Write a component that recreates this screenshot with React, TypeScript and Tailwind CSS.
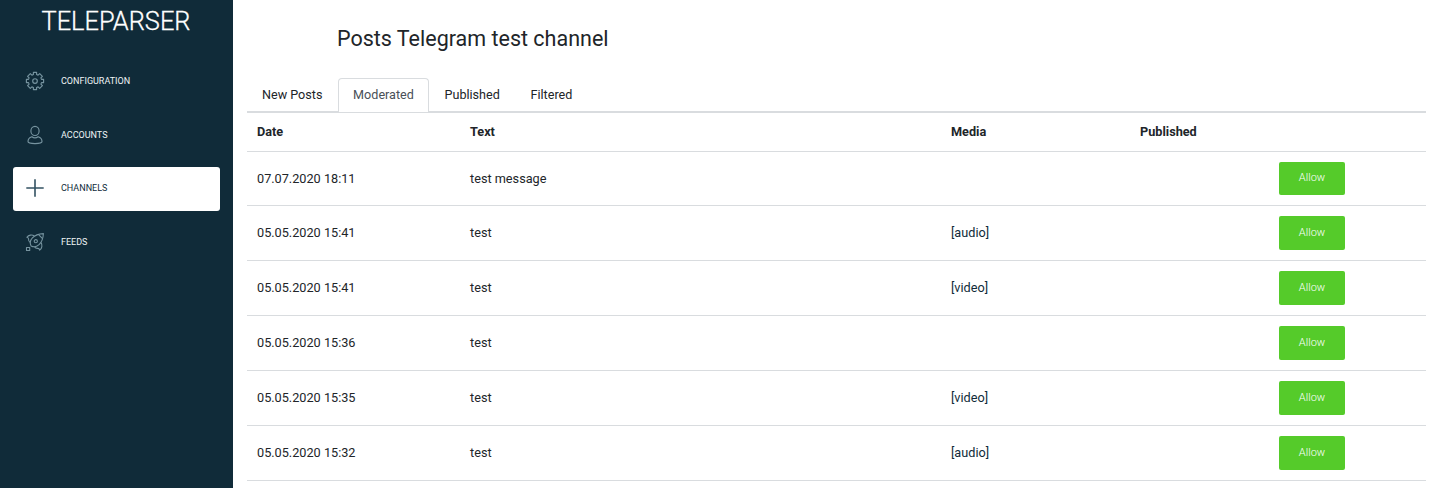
import React from "react";

function GearIcon() {
  return (
    <svg width="20" height="20" viewBox="0 0 20 20" fill="none" stroke="currentColor" strokeWidth="1.15" strokeLinejoin="round">
      <path d="M8.4 1.4h3.2v2.1l1.5.6 1.6-1.5 2.7 2.7-1.5 1.6.6 1.5h2.1v3.2h-2.1l-.6 1.5 1.5 1.6-2.7 2.7-1.6-1.5-1.5.6v2.1H8.4v-2.1l-1.5-.6-1.6 1.5-2.7-2.7 1.5-1.6-.6-1.5H1.4V8.4h2.1l.6-1.5-1.5-1.6 2.7-2.7 1.6 1.5 1.5-.6z" />
      <circle cx="10" cy="10" r="2.3" />
    </svg>
  );
}

function UserIcon() {
  return (
    <svg width="20" height="20" viewBox="0 0 20 20" fill="none" stroke="currentColor" strokeWidth="1.15">
      <ellipse cx="10" cy="5.9" rx="4.1" ry="4.6" />
      <path d="M6.9 11.7C4.6 12.4 3 14.2 3 16.6c0 1.2 3.1 2 7 2s7-.8 7-2c0-2.4-1.6-4.2-3.9-4.9-1.8 1.3-4.4 1.3-6.2 0z" />
    </svg>
  );
}

function PlusIcon() {
  return (
    <svg width="20" height="20" viewBox="0 0 20 20" fill="none" stroke="currentColor" strokeWidth="1.6">
      <path d="M10 1.3v17.4M1.3 10h17.4" />
    </svg>
  );
}

function RocketIcon() {
  return (
    <svg width="20" height="20" viewBox="0 0 20 20" fill="none" stroke="currentColor" strokeWidth="1.1" strokeLinejoin="round">
      <path d="M18.4 1.6c-4.6.2-8.4 1.4-11 4.3-2.3 2.6-2.6 5.7-1.3 8 2.3 1.3 5.4 1 8-1.3 2.9-2.6 4.1-6.4 4.3-11z" />
      <path d="M13.6 2.7l3.7 3.7M9.4 3.9C7 2.5 3.6 2.8 1.9 5.3c1.2.3 1.8 1 1.7 2.1-.1 1.3.4 2.3 1.5 3M16.1 10.6c1.4 2.4 1.1 5.8-1.4 7.5-.3-1.2-1-1.8-2.1-1.7-1.3.1-2.3-.4-3-1.5" />
      <circle cx="10.8" cy="9.2" r="1.6" />
      <path d="M1.5 15.5h3.2v3H1.5z" />
    </svg>
  );
}

const navItems = [
  { label: "CONFIGURATION", icon: <GearIcon />, active: false },
  { label: "ACCOUNTS", icon: <UserIcon />, active: false },
  { label: "CHANNELS", icon: <PlusIcon />, active: true },
  { label: "FEEDS", icon: <RocketIcon />, active: false },
];

const tabs = ["New Posts", "Moderated", "Published", "Filtered"];

const posts = [
  { date: "07.07.2020 18:11", text: "test message", media: "" },
  { date: "05.05.2020 15:41", text: "test", media: "[audio]" },
  { date: "05.05.2020 15:41", text: "test", media: "[video]" },
  { date: "05.05.2020 15:36", text: "test", media: "" },
  { date: "05.05.2020 15:35", text: "test", media: "[video]" },
  { date: "05.05.2020 15:32", text: "test", media: "[audio]" },
];

const columns = "grid grid-cols-[213px_481px_189px_139px_1fr] items-center pl-[10px] border-b border-[#d9dcdf]";

export default function App() {
  return (
    <div className="flex h-[488px] w-[1438px] overflow-hidden bg-white font-[Roboto,sans-serif] text-[#212529]">
      <aside className="w-[233px] shrink-0 bg-[#102b39] text-white">
        <div className="h-[59px] pt-[3px] pr-px text-center text-[25.4px] font-light leading-[36px] [-webkit-text-stroke:0.3px_white]">
          TELEPARSER
        </div>
        <nav className="flex flex-col px-[13px]">
          {navItems.map((item) => (
            <a
              key={item.label}
              className={
                item.active
                  ? "mb-[9px] flex h-11 items-center gap-4 rounded-[3px] bg-white pb-[2px] pl-3 text-[#102b39]"
                  : "mb-[10px] flex h-11 items-center gap-4 rounded-[3px] pl-3 text-[#eef3f5]"
              }
            >
              <span className={item.active ? "text-[#335262]" : "text-[#76939f]"}>{item.icon}</span>
              <span className="text-[9px] leading-[14px]">{item.label}</span>
            </a>
          ))}
        </nav>
      </aside>

      <main className="ml-[14px] w-[1179px] shrink-0">
        <h1 className="h-[78px] pt-[23px] pl-[90px] text-[21.5px] leading-[32px]">Posts Telegram test channel</h1>
        <div className="flex h-[34px] gap-[0.7px] border-b border-[#d9dcdf] text-[12.6px] leading-[32px]">
          {tabs.map((tab) => (
            <button
              key={tab}
              className={
                tab === "Moderated"
                  ? "h-[34px] rounded-t-[4px] border border-b-0 border-[#d9dcdf] bg-white px-[14px] pb-[2px] text-[#495057]"
                  : "h-[34px] border border-b-0 border-transparent px-[14px] pb-[2px]"
              }
            >
              {tab}
            </button>
          ))}
        </div>
        <div className={`${columns} h-[40px] border-t text-[12.7px] font-bold`}>
          <div>Date</div>
          <div>Text</div>
          <div>Media</div>
          <div>Published</div>
        </div>
        {posts.map((post, i) => (
          <div key={i} className={`${columns} text-[12.7px] ${i === 0 ? "h-[54px]" : "h-[55px]"}`}>
            <div>{post.date}</div>
            <div>{post.text}</div>
            <div className="text-[#102b39]">{post.media}</div>
            <div />
            <div>
              <button
                className={
                  i === 0
                    ? "block h-[33px] w-[66px] rounded-[2px] bg-[#55cb2a] text-[11px] font-light text-white"
                    : "block h-[34px] w-[66px] rounded-[2px] bg-[#55cb2a] text-[11px] font-light text-white"
                }
              >
                Allow
              </button>
            </div>
          </div>
        ))}
      </main>
    </div>
  );
}
